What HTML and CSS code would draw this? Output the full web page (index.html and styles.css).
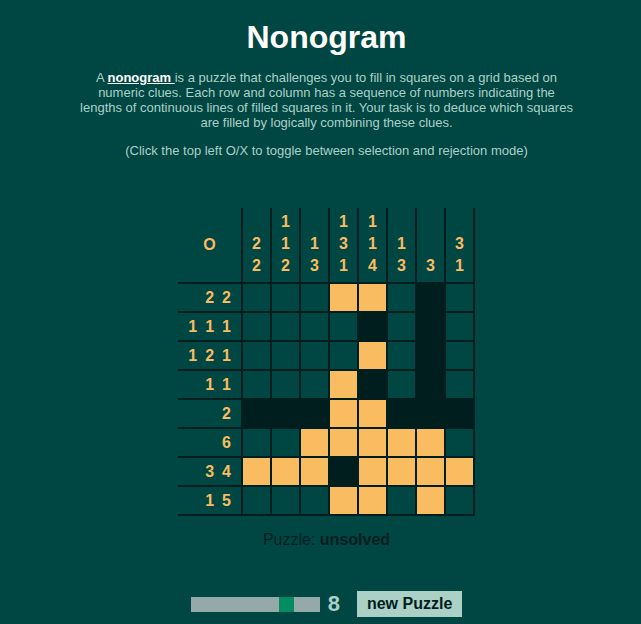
FILE: index.html
```html
<!DOCTYPE html>
<html>
<head>
    <title>Nonogram</title>
    <link rel="stylesheet" href="styles.css">
</head>
<body>
    <div class="page">
        <h1>Nonogram</h1>
        <p class="intro">A <a href="#" class="term">nonogram </a>is a puzzle that challenges you to fill in squares on a grid based on numeric clues. Each row and column has a sequence of numbers indicating the lengths of continuous lines of filled squares in it. Your task is to deduce which squares are filled by logically combining these clues.</p>
        <p class="intro">(Click the top left O/X to toggle between selection and rejection mode)</p>

        <table class="board">
            <tr>
                <td class="mode" id="modeBtn">O</td>
                <td class="col-clue"><div>2</div><div>2</div></td>
                <td class="col-clue"><div>1</div><div>1</div><div>2</div></td>
                <td class="col-clue"><div>1</div><div>3</div></td>
                <td class="col-clue"><div>1</div><div>3</div><div>1</div></td>
                <td class="col-clue"><div>1</div><div>1</div><div>4</div></td>
                <td class="col-clue"><div>1</div><div>3</div></td>
                <td class="col-clue"><div>3</div></td>
                <td class="col-clue"><div>3</div><div>1</div></td>
            </tr>
            <tr>
                <td class="row-clue"><span>2</span><span>2</span></td>
                <td class="cell"></td><td class="cell"></td><td class="cell"></td><td class="cell on"></td>
                <td class="cell on"></td><td class="cell"></td><td class="cell off"></td><td class="cell"></td>
            </tr>
            <tr>
                <td class="row-clue"><span>1</span><span>1</span><span>1</span></td>
                <td class="cell"></td><td class="cell"></td><td class="cell"></td><td class="cell"></td>
                <td class="cell off"></td><td class="cell"></td><td class="cell off"></td><td class="cell"></td>
            </tr>
            <tr>
                <td class="row-clue"><span>1</span><span>2</span><span>1</span></td>
                <td class="cell"></td><td class="cell"></td><td class="cell"></td><td class="cell"></td>
                <td class="cell on"></td><td class="cell"></td><td class="cell off"></td><td class="cell"></td>
            </tr>
            <tr>
                <td class="row-clue"><span>1</span><span>1</span></td>
                <td class="cell"></td><td class="cell"></td><td class="cell"></td><td class="cell on"></td>
                <td class="cell off"></td><td class="cell"></td><td class="cell off"></td><td class="cell"></td>
            </tr>
            <tr>
                <td class="row-clue"><span>2</span></td>
                <td class="cell off"></td><td class="cell off"></td><td class="cell off"></td><td class="cell on"></td>
                <td class="cell on"></td><td class="cell off"></td><td class="cell off"></td><td class="cell off"></td>
            </tr>
            <tr>
                <td class="row-clue"><span>6</span></td>
                <td class="cell"></td><td class="cell"></td><td class="cell on"></td><td class="cell on"></td>
                <td class="cell on"></td><td class="cell on"></td><td class="cell on"></td><td class="cell"></td>
            </tr>
            <tr>
                <td class="row-clue"><span>3</span><span>4</span></td>
                <td class="cell on"></td><td class="cell on"></td><td class="cell on"></td><td class="cell off"></td>
                <td class="cell on"></td><td class="cell on"></td><td class="cell on"></td><td class="cell on"></td>
            </tr>
            <tr>
                <td class="row-clue"><span>1</span><span>5</span></td>
                <td class="cell"></td><td class="cell"></td><td class="cell"></td><td class="cell on"></td>
                <td class="cell on"></td><td class="cell"></td><td class="cell on"></td><td class="cell"></td>
            </tr>
        </table>

        <div class="status">Puzzle: <b>unsolved</b></div>

        <div class="controls">
            <input type="range" min="1" max="10" value="8" class="slider" id="sizeRange">
            <span class="size-value" id="sizeValue">8</span>
            <button type="button" class="btn">new Puzzle</button>
        </div>
    </div>
</body>
</html>
```

FILE: styles.css
```css
body {
    margin: 0 8px 0 20px;
    background-color: #004643;
    font-family: "Liberation Sans", Arial, sans-serif;
}
.page {
    text-align: center;
}
h1 {
    color: #fffffe;
    font-size: 32px;
    margin: 19px 0 14px;
}
.intro {
    color: #abd1c6;
    font-size: 13px;
    max-width: 500px;
    margin: 13px auto;
}
.term {
    color: #fffffe;
    font-weight: bold;
}

/* puzzle grid */
.board {
    border-collapse: separate;
    border-spacing: 0;
    margin: 50px auto 0;
    color: #f9bc60;
    font-size: 16px;
    font-weight: bold;
}
.board td {
    padding: 0;
    border-bottom: 2px solid #001e1d;
}
.mode {
    width: 63px;
    text-align: center;
    vertical-align: middle;
    cursor: pointer;
}
.col-clue {
    width: 27px;
    padding: 3px 0 5px !important;
    line-height: 22px;
    vertical-align: bottom;
    text-align: center;
    border-left: 2px solid #001e1d;
}
.row-clue {
    width: 57px;
    padding: 0 6px 0 0 !important;
    text-align: right;
    vertical-align: middle;
}
.row-clue span {
    margin: 0 4px;
}
.cell {
    width: 27px;
    height: 27px;
    border-left: 2px solid #001e1d;
    cursor: pointer;
}
.board td:last-child {
    border-right: 2px solid #001e1d;
}
.cell.on {
    background-color: #f9bc60;
}
.cell.off {
    background-color: #001e1d;
}

.status {
    margin-top: 15px;
    color: #001e1d;
    font-size: 16px;
}

.controls {
    display: flex;
    justify-content: center;
    align-items: center;
    margin-top: 42px;
}
.slider {
    -webkit-appearance: none;
    appearance: none;
    width: 129px;
    height: 15px;
    margin: 0 8px 0 0;
    background: #d3d3d3;
    outline: none;
    opacity: 0.7;
}
.slider::-webkit-slider-thumb {
    -webkit-appearance: none;
    appearance: none;
    width: 15px;
    height: 15px;
    background: #04AA6D;
    cursor: pointer;
}
.size-value {
    color: #abd1c6;
    font-size: 22px;
    font-weight: bold;
    margin-right: 17px;
}
.btn {
    background-color: #abd1c6;
    color: #001e1d;
    font-family: "Liberation Sans", Arial, sans-serif;
    font-size: 16px;
    font-weight: bold;
    padding: 4px 10px;
    border: none;
    border-radius: 0;
    cursor: pointer;
}
```
